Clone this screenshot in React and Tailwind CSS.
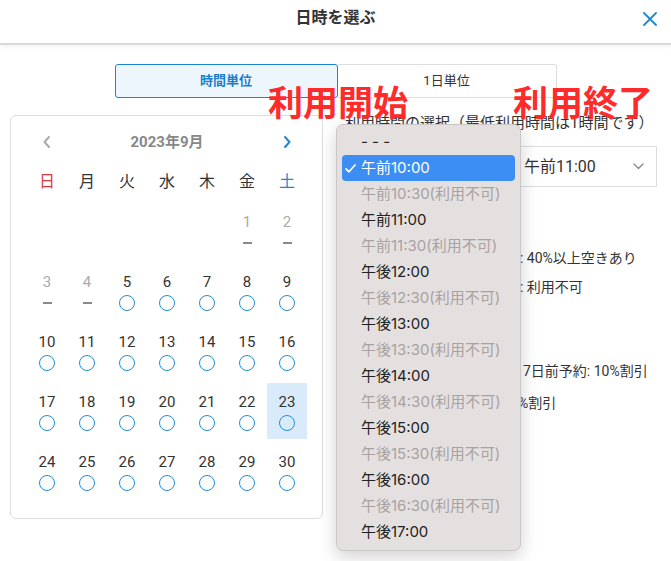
import React from "react";

const FONT = { fontFamily: "Roboto, 'Noto Sans CJK JP', sans-serif" };
const MAC = { fontFamily: "Inter, 'Noto Sans CJK JP', sans-serif" };

function Chevron({ dir, color }) {
  return (
    <svg width="10" height="14" viewBox="0 0 10 14" fill="none">
      {dir === "left" ? (
        <path d="M7 2 L2.5 7 L7 12" stroke={color} strokeWidth="2" strokeLinecap="round" strokeLinejoin="round" />
      ) : (
        <path d="M3 2 L7.5 7 L3 12" stroke={color} strokeWidth="2" strokeLinecap="round" strokeLinejoin="round" />
      )}
    </svg>
  );
}

function Calendar() {
  const cells = [];
  for (let i = 0; i < 5; i++) cells.push(null);
  for (let d = 1; d <= 30; d++) cells.push(d);
  const weekdays = [
    { t: "日", c: "text-[#e0393e]" },
    { t: "月", c: "text-[#333]" },
    { t: "火", c: "text-[#333]" },
    { t: "水", c: "text-[#333]" },
    { t: "木", c: "text-[#333]" },
    { t: "金", c: "text-[#333]" },
    { t: "土", c: "text-[#1a8ad4]" },
  ];
  return (
    <div className="w-[313px] h-[404px] border border-[#dedede] rounded-[6px] pt-[14px] pl-[16px]" style={FONT}>
      <div className="grid grid-cols-7 w-[280px] h-[24px] items-center">
        <div className="flex justify-center">
          <Chevron dir="left" color="#aaaaaa" />
        </div>
        <div className="col-span-5 text-center text-[15px] font-bold text-[#888]">2023年9月</div>
        <div className="flex justify-center">
          <Chevron dir="right" color="#1a8ad4" />
        </div>
      </div>
      <div className="grid grid-cols-7 w-[280px] h-[24px] items-center mt-[16px]">
        {weekdays.map((w) => (
          <div key={w.t} className={`text-center text-[16px] ${w.c}`}>
            {w.t}
          </div>
        ))}
      </div>
      <div className="grid grid-cols-7 w-[280px] gap-y-[4px] mt-[9px]">
        {cells.map((d, i) => {
          if (d === null) return <div key={i} className="h-[56px]" />;
          const off = d <= 4;
          const sel = d === 23;
          return (
            <div
              key={i}
              className={`h-[56px] flex flex-col items-center pt-[9px] ${sel ? "bg-[#d9ebfb]" : ""}`}
            >
              <div className={`h-[20px] leading-[20px] text-[15px] ${off ? "text-[#aaa]" : "text-[#333]"}`}>{d}</div>
              <div className="mt-[3px] w-[16px] h-[16px] flex items-center justify-center">
                {off ? (
                  <div className="w-[9px] h-[2px] bg-[#888]" />
                ) : (
                  <div className="w-[16px] h-[16px] rounded-full border-[1.5px] border-[#1e8fd8]" />
                )}
              </div>
            </div>
          );
        })}
      </div>
    </div>
  );
}

function RightPanel() {
  return (
    <div className="flex-1 pr-[14px] text-[#333]" style={FONT}>
      <div className="text-[15px] leading-[16px] whitespace-nowrap">利用時間の選択（最低利用時間は1時間です）</div>
      <div className="flex items-center mt-[15px] gap-[9px]">
        <div className="w-[160px] h-[41px] border border-[#ddd]" />
        <div className="flex-1 h-[41px] border border-[#ddd] flex items-center justify-between pl-[9px] pr-[12px]">
          <span className="text-[16px]">午前11:00</span>
          <svg width="11" height="7" viewBox="0 0 11 7" fill="none">
            <path d="M1 1 L5.5 5.5 L10 1" stroke="#8a8a8a" strokeWidth="1.4" strokeLinecap="round" strokeLinejoin="round" />
          </svg>
        </div>
      </div>
      <div className="flex text-[14px] leading-[20px] mt-[61px] whitespace-nowrap">
        <span className="w-[175px] shrink-0" />
        <span>: 40%以上空きあり</span>
      </div>
      <div className="flex text-[14px] leading-[20px] mt-[9px] whitespace-nowrap">
        <span className="w-[175px] shrink-0" />
        <span>: 利用不可</span>
      </div>
      <div className="flex text-[14px] leading-[20px] mt-[64px] whitespace-nowrap">
        <span className="w-[178px] shrink-0" />
        <span>7日前予約: 10%割引</span>
      </div>
      <div className="flex text-[14px] leading-[20px] mt-[12px] whitespace-nowrap">
        <span className="w-[173px] shrink-0" />
        <span>%割引</span>
      </div>
    </div>
  );
}

function Dropdown() {
  const items = [];
  for (let h = 10; h <= 17; h++) {
    const pre = h < 12 ? "午前" : "午後";
    items.push({ t: `${pre}${h}:00`, off: false, sel: h === 10 });
    if (h < 17) items.push({ t: `${pre}${h}:30(利用不可)`, off: true, sel: false });
  }
  return (
    <div
      className="absolute left-[336px] top-[124px] w-[185px] h-[427px] rounded-[7px] bg-[#e5e0e0] border border-[#ccc7c7] shadow-[0_6px_18px_rgba(0,0,0,0.18)] pt-[4px]"
      style={MAC}
    >
      <div className="h-[26px] mx-[5px] flex items-center pl-[19px] text-[15px] text-[#222]">- - -</div>
      {items.map((it) => (
        <div
          key={it.t}
          className={`relative h-[26px] mx-[5px] rounded-[4px] flex items-center pl-[19px] text-[15px] whitespace-nowrap ${
            it.sel ? "bg-[#3d8ef4] text-white" : it.off ? "text-[#a8a2a2]" : "text-[#222]"
          }`}
        >
          {it.sel && (
            <svg className="absolute left-[3px] top-[9px]" width="11" height="9" viewBox="0 0 11 9" fill="none">
              <path d="M1 4.8 L4 7.8 L10 1" stroke="white" strokeWidth="1.7" strokeLinecap="round" strokeLinejoin="round" />
            </svg>
          )}
          {it.t}
        </div>
      ))}
    </div>
  );
}

export default function App() {
  return (
    <div className="relative w-[671px] h-[561px] bg-white overflow-hidden" style={FONT}>
      <div className="relative h-[45px] border-b-2 border-[#d9d9d9] shadow-[0_2px_3px_rgba(0,0,0,0.05)] flex justify-center pt-[8px]">
        <div className="text-[16px] leading-[20px] font-bold text-[#333]">日時を選ぶ</div>
        <svg className="absolute left-[643px] top-[12px]" width="14" height="14" viewBox="0 0 14 14" fill="none">
          <path d="M1 1 L13 13 M13 1 L1 13" stroke="#1a8ad4" strokeWidth="1.8" strokeLinecap="round" />
        </svg>
      </div>
      <div className="flex justify-center mt-[19px]">
        <div className="w-[223px] h-[34px] border border-[#1b84d0] rounded-[3px] bg-[#eef6fd] flex items-center justify-center text-[13px] font-bold text-[#1a7fc8]">
          時間単位
        </div>
        <div className="w-[219px] h-[34px] border border-l-0 border-[#dddddd] rounded-r-[3px] flex items-center justify-center text-[13px] text-[#333]">
          1日単位
        </div>
      </div>
      <div className="flex mt-[17px] pl-[10px] gap-[22px]">
        <Calendar />
        <RightPanel />
      </div>
      <Dropdown />
      <div className="absolute left-[268px] top-[83px] text-[35px] leading-none font-bold text-[#ff2a2a] whitespace-nowrap" style={{ fontFamily: "'Noto Sans CJK JP', sans-serif" }}>
        利用開始
      </div>
      <div className="absolute left-[513px] top-[83px] text-[35px] leading-none font-bold text-[#ff2a2a] whitespace-nowrap" style={{ fontFamily: "'Noto Sans CJK JP', sans-serif" }}>
        利用終了
      </div>
    </div>
  );
}
